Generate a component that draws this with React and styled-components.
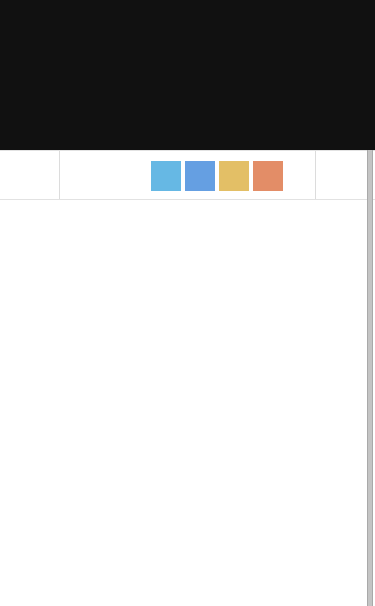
import React from 'react'
import styled, { createGlobalStyle } from 'styled-components'

const Global = createGlobalStyle`
    html, body {
        margin:0;
        padding:0;
        background-color:#fff;
        font-family:"Liberation Sans", Arial, sans-serif;
    }
`

// Styled Components
const Page = styled.div`
    position:relative;
    width:375px;
    height:606px;
    overflow:hidden;
    background-color:#fff;
`
const Hero = styled.div`
    position:relative;
    z-index:2;
    height:150px;
    background-color:#111;
`
const Toolbar = styled.div`
    display:grid;
    grid-template-columns:60px 1fr 59px;
    height:48px;
    border-top:1px solid #e2e2e2;
    border-bottom:1px solid #e2e2e2;
`
const Cell = styled.div`
    display:flex;
    align-items:flex-start;
    justify-content:${p => p.$align || 'flex-start'};
    padding:${p => p.$pad || '0'};
    border-right:${p => p.$divider ? '1px solid #dcdcdc' : 'none'};
`
const Swatches = styled.div`
    display:flex;
    gap:4px;
`
const Swatch = styled.button`
    width:30px;
    height:30px;
    margin:0;
    padding:0;
    border:none;
    outline:0;
    background-color:${p => p.$color};
    cursor:pointer;
`
const Scrollbar = styled.div`
    position:absolute;
    top:0;
    bottom:0;
    right:2px;
    width:4px;
    background-color:#c4c4c4;
    border-left:1px solid #a9a9a9;
    border-right:1px solid #a9a9a9;
    z-index:1;
`

const colors = ['#66b8e4', '#659fe2', '#e3bf66', '#e38d67']

export default () => {
    return (
        <Page>
            <Global />
            <Hero />
            <Toolbar>
                <Cell $divider />
                <Cell $divider $align="flex-end" $pad="10px 32px 0 0">
                    <Swatches>
                        {colors.map((color, index) => (
                            <Swatch key={index} $color={color} />
                        ))}
                    </Swatches>
                </Cell>
                <Cell />
            </Toolbar>
            <Scrollbar />
        </Page>
    )
}
